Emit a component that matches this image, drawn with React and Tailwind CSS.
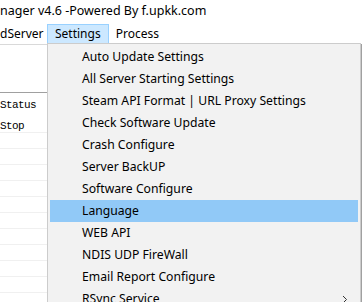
import React from "react";

const items = [
  "Auto Update Settings",
  "All Server Starting Settings",
  "Steam API Format | URL Proxy Settings",
  "Check Software Update",
  "Crash Configure",
  "Server BackUP",
  "Software Configure",
  "Language",
  "WEB API",
  "NDIS UDP FireWall",
  "Email Report Configure",
  "RSync Service",
];

export default function App() {
  return (
    <div className="relative w-[362px] h-[302px] overflow-hidden bg-white text-black font-['Noto_Sans',sans-serif]">
      <div className="h-[22px] pt-[1px] flex items-center text-[12.5px] whitespace-nowrap">
        nager v4.6 -Powered By f.upkk.com
      </div>
      <div className="h-[22px] flex items-start text-[12px] whitespace-nowrap">
        <div className="mt-[2px] h-[20px] w-[47px] shrink-0 flex items-center justify-start border border-transparent border-l-0">dServer</div>
        <div className="mt-[2px] h-[20px] flex items-center px-[7px] border border-[#99d1ff] bg-[#cce8ff]">Settings</div>
        <div className="mt-[2px] h-[20px] flex items-center px-[6px] border border-transparent">Process</div>
      </div>
      <div className="w-[47px] flex flex-col border-t border-[#d9d9d9]">
        <div className="h-[47px]" />
        <div className="border-t border-[#a0a0a0] h-[25px] pt-[1px] flex items-center font-['Liberation_Mono',monospace] text-[11px] tracking-[-0.6px]">Status</div>
        <div className="h-[15px] pt-[4px] flex items-center font-['Liberation_Mono',monospace] text-[11px] tracking-[-0.6px]">Stop</div>
        {Array.from({ length: 11 }).map((_, i) => (
          <div key={i} className="h-[16px] border-t border-[#f0f0f0]" />
        ))}
      </div>
      <div className="absolute left-[47px] top-[43px] w-[314px] border border-[#cccccc] bg-[#f2f2f2] p-[2px] shadow-[1px_1px_0_#a0a0a0]">
        {items.map((t) => (
          <div
            key={t}
            className={
              "relative h-[22px] flex items-center pl-[32px] text-[12.2px] whitespace-nowrap " +
              (t === "Language" ? "bg-[#91c9f7]" : "")
            }
          >
            {t}
            {t === "RSync Service" && (
              <svg className="absolute right-[10px] top-[7px]" width="6" height="9" viewBox="0 0 6 9">
                <polyline points="1,1 4.5,4.5 1,8" fill="none" stroke="#333" strokeWidth="1" />
              </svg>
            )}
          </div>
        ))}
      </div>
    </div>
  );
}
